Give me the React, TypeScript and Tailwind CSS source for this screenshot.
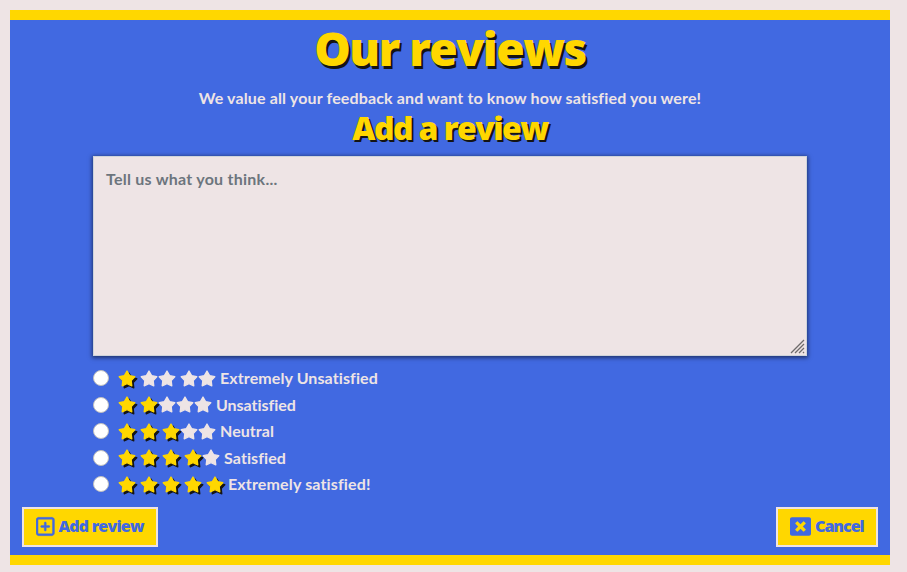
import React from 'react';
import { FaRegSquarePlus } from 'react-icons/fa6';
import { FaWindowClose } from 'react-icons/fa';

type Rating = { label: string; gold: number; gaps: number[]; tracking: string };

// gaps[i] is the space in pixels that follows star i
const ratings: Rating[] = [
  { label: 'Extremely Unsatisfied', gold: 1, gaps: [4, 0, 4, 0, 4], tracking: 'tracking-[0.1px]' },
  { label: 'Unsatisfied', gold: 2, gaps: [4, 0, 0, 0, 4], tracking: 'tracking-[-0.03px]' },
  { label: 'Neutral', gold: 3, gaps: [4, 4, 0, 0, 4], tracking: 'tracking-[0.05px]' },
  { label: 'Satisfied', gold: 4, gaps: [4, 4, 4, 0, 4], tracking: 'tracking-[0.1px]' },
  { label: 'Extremely satisfied!', gold: 5, gaps: [4, 4, 4, 4, 4], tracking: 'tracking-[0.15px]' },
];

function Star({ gold, gap }: { gold: boolean; gap: number }) {
  return (
    <svg
      viewBox="0 0 18 17"
      fill="currentColor"
      stroke="currentColor"
      strokeWidth="1.3"
      strokeLinejoin="round"
      style={{ marginRight: gap }}
      className={
        gold
          ? 'h-[17px] w-[18px] shrink-0 text-[#ffd700] drop-shadow-[2px_2px_0_#141414]'
          : 'h-[17px] w-[18px] shrink-0 text-[#eee4e5]'
      }
    >
      <path d="M9 1 11.6 5.6 16.8 6.7 13.2 10.6 13.8 15.8 9 13.6 4.2 15.8 4.8 10.6 1.2 6.7 6.4 5.6Z" />
    </svg>
  );
}

function RatingRow({ rating }: { rating: Rating }) {
  return (
    <label className="flex h-[26.5px] items-center">
      <input
        type="radio"
        name="rating"
        className="mr-[8.5px] size-4 shrink-0 appearance-none rounded-full border border-[#bfbfbf] bg-white"
      />
      {rating.gaps.map((gap, i) => (
        <Star key={i} gold={i < rating.gold} gap={gap} />
      ))}
      <span className={`ml-[0.5px] whitespace-nowrap leading-6 ${rating.tracking}`}>{rating.label}</span>
    </label>
  );
}

export default function App() {
  return (
    <div className="h-[572px] w-[907px] bg-[#eee4e5] pt-[10px] pl-[10px] font-['Lato',sans-serif] text-base font-bold text-[#eee4e5]">
      <main className="flex h-[555px] w-[880px] flex-col border-y-[10px] border-[#ffd700] bg-[#4169e1]">
        <h1 className="flex h-[58px] items-center justify-center whitespace-nowrap font-['Open_Sans',sans-serif] text-[46px] leading-none font-extrabold tracking-[-1.5px] text-[#ffd700] [text-shadow:2px_3px_0_#141414]">
          <span className="pb-[2px]">Our reviews</span>
        </h1>
        <p className="mt-[8px] text-center leading-6 tracking-[0.14px]">
          We value all your feedback and want to know how satisfied you were!
        </p>
        <h2 className="flex h-[38px] items-center justify-center whitespace-nowrap font-['Open_Sans',sans-serif] text-[32px] leading-none font-extrabold tracking-[-1.6px] text-[#ffd700] [text-shadow:2px_2px_0_#141414]">
          <span className="pb-[2px]">Add a review</span>
        </h2>
        <form className="mt-[8px] flex flex-col">
          <div className="mx-[83px] flex flex-col">
            <div className="relative h-[200px]">
              <textarea
                placeholder="Tell us what you think..."
                className="block h-[200px] w-[714px] resize-none border border-[#ced4da] bg-[#eee4e5] px-3 py-[10px] leading-6 tracking-[0.25px] shadow-[0_1px_4px_1px_rgba(0,0,0,0.5)] outline-none placeholder:text-[#6c757d]"
              />
              <svg className="absolute right-[2px] bottom-[2px] size-[15px]" viewBox="0 0 15 15" fill="none" stroke="#6e6b6b" strokeWidth="1.3">
                <path d="M1 14 14 1M5 14 14 5M9 14 14 9M13 14 14 13" />
              </svg>
            </div>
            <div className="mt-[9px] flex flex-col">
              {ratings.map((r) => (
                <RatingRow key={r.label} rating={r} />
              ))}
            </div>
          </div>
          <div className="mt-[9.5px] flex justify-between px-3 font-['Open_Sans',sans-serif] text-base font-extrabold text-[#4169e1]">
            <button type="button" className="flex h-10 w-[136px] items-center border-2 border-[#eee4e5] bg-[#ffd700] pb-px pl-3">
              <FaRegSquarePlus className="mr-[4px] h-[21px] w-[18.5px] shrink-0 stroke-current stroke-[10px]" />
              <span className="whitespace-nowrap pb-px tracking-[-0.8px]">Add review</span>
            </button>
            <button type="button" className="flex h-10 w-[102px] items-center border-2 border-[#eee4e5] bg-[#ffd700] pb-px pl-3">
              <FaWindowClose className="mr-[4px] size-[21px] shrink-0" />
              <span className="whitespace-nowrap pb-px tracking-[-1px]">Cancel</span>
            </button>
          </div>
        </form>
      </main>
    </div>
  );
}
